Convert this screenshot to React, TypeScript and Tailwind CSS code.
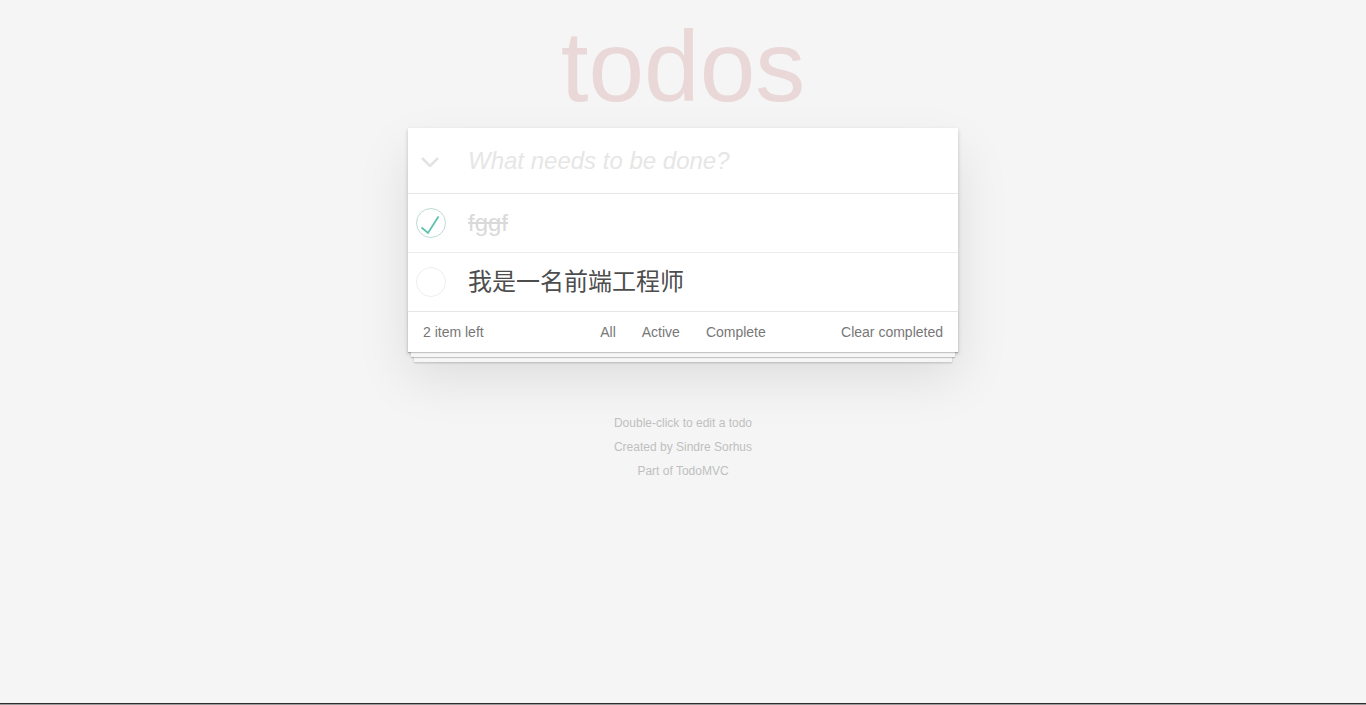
import { useState } from 'react';

type Todo = { id: number; title: string; completed: boolean };

const initialTodos: Todo[] = [
  { id: 1, title: 'fggf', completed: true },
  { id: 2, title: '我是一名前端工程师', completed: false },
];

const filters = ['All', 'Active', 'Complete'];

const Toggle = ({ checked }: { checked: boolean }) => (
  <svg width="30" height="30" viewBox="0 0 30 30">
    <circle cx="15" cy="15" r="14.5" fill="none" stroke={checked ? '#bddad5' : '#ededed'} strokeWidth="1" />
    {checked && (
      <polyline points="5.5,19.5 12,25 22.5,8.5" fill="none" stroke="#5dc2af" strokeWidth="1.8" />
    )}
  </svg>
);

export default function App() {
  const [todos, setTodos] = useState<Todo[]>(initialTodos);
  const [text, setText] = useState('');

  const toggle = (id: number) =>
    setTodos(todos.map((t) => (t.id === id ? { ...t, completed: !t.completed } : t)));

  return (
    <div className="h-[705px] overflow-hidden flex flex-col bg-[#f5f5f5] text-[#4d4d4d] font-[Liberation_Sans,Arial,Noto_Sans_CJK_SC,sans-serif]">
      <div className="w-[550px] mx-auto pt-[16px]">
        {/* Title */}
        <h1 className="h-[100px] text-[100px] leading-none font-thin text-center text-[rgba(175,47,47,0.15)]">
          todos
        </h1>

        {/* App card */}
        <section className="mt-[12px] bg-white shadow-[0_2px_4px_0_rgba(0,0,0,0.2),0_25px_50px_0_rgba(0,0,0,0.1)]">
          <header className="h-[65px] flex items-center">
            <div className="w-[60px] shrink-0 pl-[13px] pt-[2px]">
              <svg width="18" height="10" viewBox="0 0 18 10">
                <polyline points="1,1 9,9 17,1" fill="none" stroke="#e3e3e3" strokeWidth="2.5" />
              </svg>
            </div>
            <input
              value={text}
              onChange={(e) => setText(e.target.value)}
              placeholder="What needs to be done?"
              className="flex-1 h-full pr-4 text-[24px] bg-transparent outline-none placeholder:italic placeholder:text-[#e6e6e6]"
            />
          </header>

          <ul className="border-t border-[#e6e6e6]">
            {todos.map((todo) => (
              <li key={todo.id} className="h-[59px] flex items-center border-b border-[#ededed] last:border-b-0 last:h-[58px]">
                <button onClick={() => toggle(todo.id)} className="w-[60px] shrink-0 pl-[8px] flex items-center">
                  <Toggle checked={todo.completed} />
                </button>
                <label
                  className={
                    todo.completed
                      ? 'text-[24px] leading-[1.2] text-[#d9d9d9] line-through'
                      : 'text-[24px] leading-[1.2] text-[#4d4d4d]'
                  }
                >
                  {todo.title}
                </label>
              </li>
            ))}
          </ul>

          {/* Footer */}
          <footer className="h-[41px] border-t border-[#e6e6e6] px-[15px] grid grid-cols-[1fr_auto_1fr] items-center text-[14px] leading-[20px] text-[#777] shadow-[0_1px_1px_rgba(0,0,0,0.2),0_8px_0_-3px_#f6f6f6,0_9px_1px_-3px_rgba(0,0,0,0.2),0_16px_0_-6px_#f6f6f6,0_17px_2px_-6px_rgba(0,0,0,0.2)]">
            <span className="-mt-[1px]">2 item left</span>
            <ul className="flex gap-[4px] -mt-[1px]">
              {filters.map((f) => (
                <li key={f}>
                  <a className="block m-[3px] px-[7px] py-[3px] border border-transparent rounded-[3px]">{f}</a>
                </li>
              ))}
            </ul>
            <button className="justify-self-end">Clear completed</button>
          </footer>
        </section>

        {/* Info */}
        <div className="mt-[59px] flex flex-col items-center text-[12px] leading-[24px] text-[#bfbfbf]">
          <p>Double-click to edit a todo</p>
          <p>Created by Sindre Sorhus</p>
          <p>Part of TodoMVC</p>
        </div>
      </div>

      {/* Window bottom edge */}
      <div className="mt-auto h-[2px] border-t border-[#2f2f2f] bg-[#9a9a9a]" />
    </div>
  );
}
